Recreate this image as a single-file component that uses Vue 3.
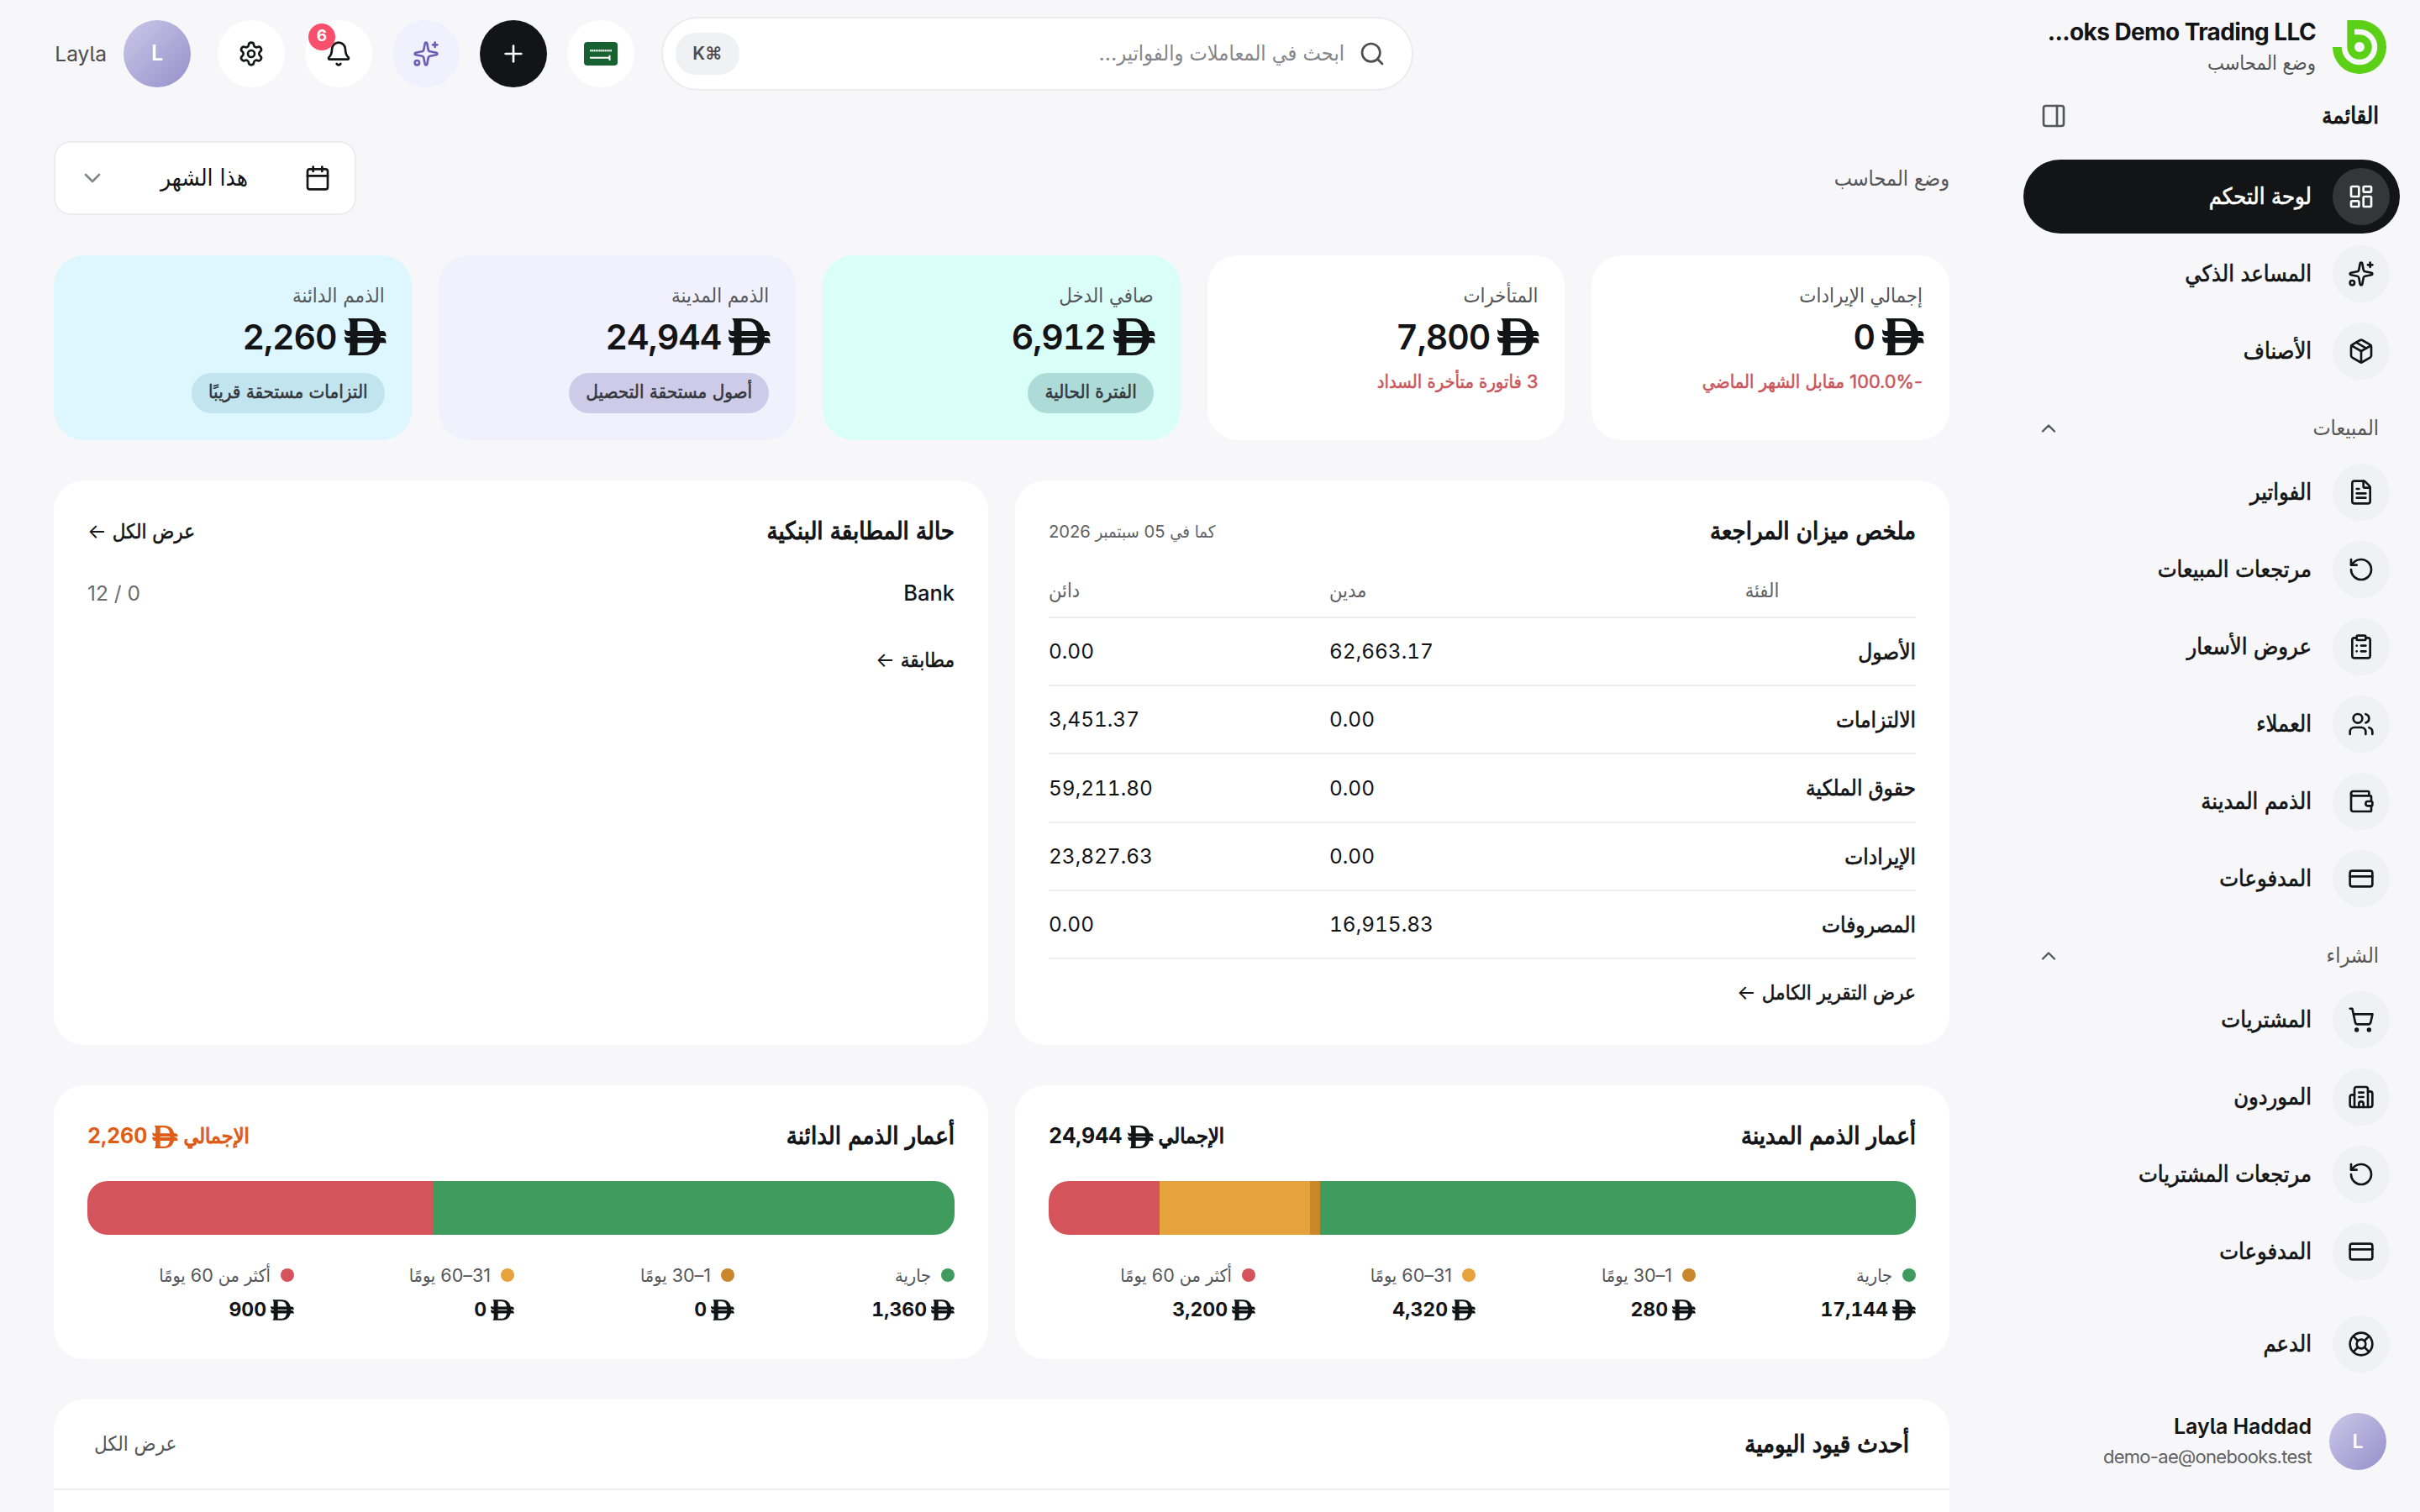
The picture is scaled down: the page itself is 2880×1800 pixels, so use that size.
<template>
  <div class="app" dir="rtl">
    <aside class="sidebar">
      <div class="brand">
        <svg class="logo" viewBox="0 0 64 64">
          <path
            fill="#5bd016"
            fill-rule="evenodd"
            d="M17.3 0H32A32 32 0 1 1 0 32H10.7A21.3 21.3 0 1 0 32 10.7H26V17.3H32A14.7 14.7 0 1 1 17.3 32ZM26 32a6 6 0 1 0 12 0a6 6 0 1 0-12 0Z"
          />
        </svg>
        <div class="brand-text">
          <div class="brand-name" dir="ltr">...oks Demo Trading LLC</div>
          <div class="brand-mode">وضع المحاسب</div>
        </div>
      </div>

      <div class="menu-head">
        <span class="menu-title">القائمة</span>
        <svg class="icon" viewBox="0 0 24 24" v-html="icons.panel"></svg>
      </div>

      <nav class="nav">
        <template v-for="(group, g) in menu" :key="g">
          <div v-if="group.title" class="group-head">
            <span>{{ group.title }}</span>
            <svg class="icon chev" viewBox="0 0 24 24" v-html="icons.up"></svg>
          </div>
          <div
            v-for="item in group.items"
            :key="item.label"
            :class="['nav-item', { active: item.active }]"
          >
            <span class="nav-icon">
              <svg class="icon" viewBox="0 0 24 24" v-html="icons[item.icon]"></svg>
            </span>
            <span class="nav-label">{{ item.label }}</span>
          </div>
        </template>
      </nav>

      <div class="nav-item support">
        <span class="nav-icon">
          <svg class="icon" viewBox="0 0 24 24" v-html="icons.buoy"></svg>
        </span>
        <span class="nav-label">الدعم</span>
      </div>

      <div class="user">
        <span class="avatar small">L</span>
        <div class="user-text">
          <div class="user-name">Layla Haddad</div>
          <div class="user-mail">demo-ae@onebooks.test</div>
        </div>
      </div>
    </aside>

    <main class="main">
      <header class="topbar">
        <div class="search">
          <svg class="icon" viewBox="0 0 24 24" v-html="icons.search"></svg>
          <span class="placeholder">ابحث في المعاملات والفواتير...</span>
          <span class="kbd">⌘K</span>
        </div>
        <div class="actions">
          <span class="round">
            <svg class="flag" viewBox="0 0 40 28">
              <rect width="40" height="28" rx="4" fill="#17602f" />
              <path d="M7 10.3H33" stroke="#fff" stroke-width="2.6" stroke-dasharray="1.8 .4" opacity=".85" />
              <path d="M7 18.7H31M30.5 15.8V22" stroke="#fff" stroke-width="2" fill="none" />
            </svg>
          </span>
          <span class="round dark">
            <svg class="icon" viewBox="0 0 24 24" v-html="icons.plus"></svg>
          </span>
          <span class="round lilac">
            <svg class="icon" viewBox="0 0 24 24" v-html="icons.sparkles"></svg>
          </span>
          <span class="round">
            <svg class="icon" viewBox="0 0 24 24" v-html="icons.bell"></svg>
            <span class="badge">6</span>
          </span>
          <span class="round">
            <svg class="icon" viewBox="0 0 24 24" v-html="icons.gear"></svg>
          </span>
        </div>
        <div class="me">
          <span class="avatar">L</span>
          <span class="me-name">Layla</span>
        </div>
      </header>

      <div class="subbar">
        <span class="mode">وضع المحاسب</span>
        <div class="period">
          <svg class="icon" viewBox="0 0 24 24" v-html="icons.calendar"></svg>
          <span class="period-label">هذا الشهر</span>
          <svg class="icon muted" viewBox="0 0 24 24" v-html="icons.down"></svg>
        </div>
      </div>

      <section class="kpis">
        <div v-for="k in kpis" :key="k.label" :class="['kpi', k.tone]">
          <div class="kpi-label">{{ k.label }}</div>
          <div class="kpi-value">
            <svg class="aed" viewBox="0 0 50 44"><path :d="aed" fill-rule="evenodd" /><path :d="aedBars" /></svg>
            <span>{{ k.value }}</span>
          </div>
          <div v-if="k.pill" class="kpi-pill">{{ k.pill }}</div>
          <div v-else class="kpi-note">{{ k.note }}</div>
        </div>
      </section>

      <section class="two">
        <div class="card tall">
          <div class="card-head">
            <h3>ملخص ميزان المراجعة</h3>
            <span class="as-of">كما في 05 سبتمبر 2026</span>
          </div>
          <div class="table">
            <div class="tr th">
              <span class="c-name">الفئة</span>
              <span class="c-debit">مدين</span>
              <span class="c-credit">دائن</span>
            </div>
            <div v-for="row in balance" :key="row[0]" class="tr">
              <span class="c-name">{{ row[0] }}</span>
              <span class="c-debit">{{ row[1] }}</span>
              <span class="c-credit">{{ row[2] }}</span>
            </div>
          </div>
          <div class="link full">عرض التقرير الكامل <i>←</i></div>
        </div>

        <div class="card tall">
          <div class="card-head">
            <h3>حالة المطابقة البنكية</h3>
            <span class="link">عرض الكل <i>←</i></span>
          </div>
          <div class="bank">
            <span class="bank-name">Bank</span>
            <span class="bank-count">0 / 12</span>
          </div>
          <div class="link match">مطابقة <i>←</i></div>
        </div>
      </section>

      <section class="two">
        <div v-for="a in aging" :key="a.title" class="card aging">
          <div class="card-head">
            <h3>{{ a.title }}</h3>
            <span :class="['total', { orange: a.orange }]">
              <span class="total-label">الإجمالي</span>
              <svg class="aed" viewBox="0 0 50 44"><path :d="aed" fill-rule="evenodd" /><path :d="aedBars" /></svg>
              <span>{{ fmt(sum(a.values)) }}</span>
            </span>
          </div>
          <div class="bar">
            <span
              v-for="(v, i) in a.values"
              :key="i"
              :class="'b' + i"
              :style="{ width: (v / sum(a.values)) * 100 + '%' }"
            ></span>
          </div>
          <div class="legend">
            <div v-for="(v, i) in a.values" :key="i">
              <div class="legend-label"><span :class="['dot', 'b' + i]"></span>{{ buckets[i] }}</div>
              <div class="legend-value">
                <svg class="aed" viewBox="0 0 50 44"><path :d="aed" fill-rule="evenodd" /><path :d="aedBars" /></svg>
                <span>{{ fmt(v) }}</span>
              </div>
            </div>
          </div>
        </div>
      </section>

      <section class="journal">
        <div class="journal-head">
          <h3>أحدث قيود اليومية</h3>
          <span class="all">عرض الكل</span>
        </div>
      </section>
    </main>
  </div>
</template>

<script setup>
const icons = {
  panel: '<rect width="18" height="18" x="3" y="3" rx="2"/><path d="M15 3v18"/>',
  up: '<path d="m18 15-6-6-6 6"/>',
  down: '<path d="m6 9 6 6 6-6"/>',
  dashboard:
    '<rect width="7" height="9" x="3" y="3" rx="1"/><rect width="7" height="5" x="14" y="3" rx="1"/><rect width="7" height="9" x="14" y="12" rx="1"/><rect width="7" height="5" x="3" y="16" rx="1"/>',
  sparkles:
    '<path d="M11.017 2.814a1 1 0 0 1 1.966 0l1.051 5.558a2 2 0 0 0 1.594 1.594l5.558 1.051a1 1 0 0 1 0 1.966l-5.558 1.051a2 2 0 0 0-1.594 1.594l-1.051 5.558a1 1 0 0 1-1.966 0l-1.051-5.558a2 2 0 0 0-1.594-1.594l-5.558-1.051a1 1 0 0 1 0-1.966l5.558-1.051a2 2 0 0 0 1.594-1.594z"/><path d="M20 2v4"/><path d="M22 4h-4"/><circle cx="4" cy="20" r="2"/>',
  box: '<path d="M11 21.73a2 2 0 0 0 2 0l7-4A2 2 0 0 0 21 16V8a2 2 0 0 0-1-1.73l-7-4a2 2 0 0 0-2 0l-7 4A2 2 0 0 0 3 8v8a2 2 0 0 0 1 1.73z"/><path d="M12 22V12"/><path d="M3.29 7 12 12l8.71-5"/><path d="m7.5 4.27 9 5.15"/>',
  file: '<path d="M6 22a2 2 0 0 1-2-2V4a2 2 0 0 1 2-2h8a2.4 2.4 0 0 1 1.704.706l3.588 3.588A2.4 2.4 0 0 1 20 8v12a2 2 0 0 1-2 2z"/><path d="M14 2v5a1 1 0 0 0 1 1h5"/><path d="M10 9H8"/><path d="M16 13H8"/><path d="M16 17H8"/>',
  rotate: '<path d="M3 12a9 9 0 1 0 9-9 9.75 9.75 0 0 0-6.74 2.74L3 8"/><path d="M3 3v5h5"/>',
  clipboard:
    '<rect width="8" height="4" x="8" y="2" rx="1"/><path d="M16 4h2a2 2 0 0 1 2 2v14a2 2 0 0 1-2 2H6a2 2 0 0 1-2-2V6a2 2 0 0 1 2-2h2"/><path d="M12 11h4"/><path d="M12 16h4"/><path d="M8 11h.01"/><path d="M8 16h.01"/>',
  users:
    '<path d="M16 21v-2a4 4 0 0 0-4-4H6a4 4 0 0 0-4 4v2"/><path d="M16 3.128a4 4 0 0 1 0 7.744"/><path d="M22 21v-2a4 4 0 0 0-3-3.87"/><circle cx="9" cy="7" r="4"/>',
  wallet:
    '<path d="M19 7V4a1 1 0 0 0-1-1H5a2 2 0 0 0 0 4h15a1 1 0 0 1 1 1v4h-3a2 2 0 0 0 0 4h3a1 1 0 0 0 1-1v-2a1 1 0 0 0-1-1"/><path d="M3 5v14a2 2 0 0 0 2 2h15a1 1 0 0 0 1-1v-4"/>',
  card: '<rect width="20" height="14" x="2" y="5" rx="2"/><path d="M2 10h20"/>',
  cart: '<circle cx="8" cy="21" r="1"/><circle cx="19" cy="21" r="1"/><path d="M2.05 2.05h2l2.66 12.42a2 2 0 0 0 2 1.58h9.78a2 2 0 0 0 1.95-1.57l1.65-7.43H5.12"/>',
  building:
    '<path d="M10 12h4"/><path d="M10 8h4"/><path d="M14 21v-3a2 2 0 0 0-4 0v3"/><path d="M6 10H4a2 2 0 0 0-2 2v7a2 2 0 0 0 2 2h16a2 2 0 0 0 2-2V9a2 2 0 0 0-2-2h-2"/><path d="M6 21V5a2 2 0 0 1 2-2h8a2 2 0 0 1 2 2v16"/>',
  buoy: '<circle cx="12" cy="12" r="10"/><path d="m4.93 4.93 4.24 4.24"/><path d="m14.83 9.17 4.24-4.24"/><path d="m14.83 14.83 4.24 4.24"/><path d="m9.17 14.83-4.24 4.24"/><circle cx="12" cy="12" r="4"/>',
  search: '<path d="m21 21-4.34-4.34"/><circle cx="11" cy="11" r="8"/>',
  plus: '<path d="M5 12h14"/><path d="M12 5v14"/>',
  bell: '<path d="M10.268 21a2 2 0 0 0 3.464 0"/><path d="M3.262 15.326A1 1 0 0 0 4 17h16a1 1 0 0 0 .74-1.673C19.41 13.956 18 12.499 18 8A6 6 0 0 0 6 8c0 4.499-1.411 5.956-2.738 7.326"/>',
  gear: '<path d="M9.671 4.136a2.34 2.34 0 0 1 4.659 0 2.34 2.34 0 0 0 3.319 1.915 2.34 2.34 0 0 1 2.33 4.033 2.34 2.34 0 0 0 0 3.831 2.34 2.34 0 0 1-2.33 4.033 2.34 2.34 0 0 0-3.319 1.915 2.34 2.34 0 0 1-4.659 0 2.34 2.34 0 0 0-3.32-1.915 2.34 2.34 0 0 1-2.33-4.033 2.34 2.34 0 0 0 0-3.831A2.34 2.34 0 0 1 6.35 6.051a2.34 2.34 0 0 0 3.319-1.915"/><circle cx="12" cy="12" r="3"/>',
  calendar:
    '<path d="M8 2v4"/><path d="M16 2v4"/><rect width="18" height="18" x="3" y="4" rx="2"/><path d="M3 10h18"/>'
}

// dirham sign: the D and its two wavy bars
const aed =
  'M4 0H23C36 0 43 8 43 22S36 44 23 44H4C6 42 6.5 40 6.5 37V7C6.5 4 6 2 4 0ZM15.500 3.500V40.500H22C31 40.500 34.500 35 34.500 22S31 3.500 22 3.500Z'
const aedBars =
  'M0 13C1 14.500 2.500 15 4.500 15H45C48 15 49.500 16.500 49.500 21.500C48.500 21 47 21 45 21H4.500C1.500 21 0 18 0 13ZM0 21.500C1 22.500 2.500 22.700 4.500 22.700H45C48 22.700 49.500 25 49.500 30C48.500 29.200 47 29.200 45 29.200H4.500C1.500 29.200 0 26.500 0 21.500Z'

const menu = [
  {
    items: [
      { label: 'لوحة التحكم', icon: 'dashboard', active: true },
      { label: 'المساعد الذكي', icon: 'sparkles' },
      { label: 'الأصناف', icon: 'box' }
    ]
  },
  {
    title: 'المبيعات',
    items: [
      { label: 'الفواتير', icon: 'file' },
      { label: 'مرتجعات المبيعات', icon: 'rotate' },
      { label: 'عروض الأسعار', icon: 'clipboard' },
      { label: 'العملاء', icon: 'users' },
      { label: 'الذمم المدينة', icon: 'wallet' },
      { label: 'المدفوعات', icon: 'card' }
    ]
  },
  {
    title: 'الشراء',
    items: [
      { label: 'المشتريات', icon: 'cart' },
      { label: 'الموردون', icon: 'building' },
      { label: 'مرتجعات المشتريات', icon: 'rotate' },
      { label: 'المدفوعات', icon: 'card' }
    ]
  }
]

const kpis = [
  { label: 'إجمالي الإيرادات', value: '0', note: '-100.0% مقابل الشهر الماضي' },
  { label: 'المتأخرات', value: '7,800', note: '3 فاتورة متأخرة السداد' },
  { label: 'صافي الدخل', value: '6,912', pill: 'الفترة الحالية', tone: 'mint' },
  { label: 'الذمم المدينة', value: '24,944', pill: 'أصول مستحقة التحصيل', tone: 'lavender' },
  { label: 'الذمم الدائنة', value: '2,260', pill: 'التزامات مستحقة قريبًا', tone: 'sky' }
]

const balance = [
  ['الأصول', '62,663.17', '0.00'],
  ['الالتزامات', '0.00', '3,451.37'],
  ['حقوق الملكية', '0.00', '59,211.80'],
  ['الإيرادات', '0.00', '23,827.63'],
  ['المصروفات', '16,915.83', '0.00']
]

const buckets = ['جارية', '1–30 يومًا', '31–60 يومًا', 'أكثر من 60 يومًا']

const aging = [
  { title: 'أعمار الذمم المدينة', values: [17144, 280, 4320, 3200] },
  { title: 'أعمار الذمم الدائنة', values: [1360, 0, 0, 900], orange: true }
]

const sum = (list) => list.reduce((a, b) => a + b, 0)
const fmt = (n) => n.toLocaleString('en-US')
</script>

<style>
body {
  background: #f7f7f9;
}
</style>

<style scoped>
.app {
  display: flex;
  width: 2880px;
  height: 1800px;
  overflow: hidden;
  background: #f7f7f9;
  color: #131416;
  font-family: Inter, "DejaVu Sans Condensed", "DejaVu Sans", sans-serif;
  font-feature-settings: "cv05";
  font-size: 24px;
  line-height: 1.5;
  white-space: nowrap;
}

.app * {
  box-sizing: border-box;
}

/* the Arabic face has no medium or semibold, a thin stroke stands in */
h3 {
  margin: 0;
  font-size: 29px;
  font-weight: 400;
  line-height: 40px;
  -webkit-text-stroke: 1.1px currentColor;
}

.icon {
  width: 32px;
  height: 32px;
  flex: none;
  fill: none;
  stroke: currentColor;
  stroke-width: 2;
  stroke-linecap: round;
  stroke-linejoin: round;
}

.aed {
  flex: none;
  fill: currentColor;
}

/* sidebar */
.sidebar {
  display: flex;
  flex-direction: column;
  width: 496px;
  flex: none;
  padding: 16px 24px 0;
}

.brand {
  display: flex;
  gap: 20px;
  height: 80px;
  padding: 8px 16px 0;
}

.logo {
  width: 64px;
  height: 64px;
  flex: none;
}

.brand-text {
  display: flex;
  flex-direction: column;
  align-items: flex-start;
}

.brand-name {
  height: 32px;
  line-height: 28px;
  font-size: 28px;
  font-weight: 700;
  letter-spacing: -0.6px;
}

.brand-mode {
  line-height: 42px;
  font-size: 23.5px;
  color: #55565a;
}

.menu-head {
  display: flex;
  align-items: center;
  justify-content: space-between;
  height: 52px;
  margin-top: 16px;
  padding: 0 25px 0 20px;
  color: #55565a;
}

.menu-title {
  font-size: 27px;
  color: #131416;
  -webkit-text-stroke: 1px currentColor;
}

.nav {
  display: flex;
  flex-direction: column;
  gap: 4px;
  margin-top: 26px;
}

.nav-item {
  display: flex;
  align-items: center;
  gap: 25px;
  width: 448px;
  height: 88px;
  flex: none;
  padding: 0 12px;
  border-radius: 44px;
}

.nav-icon {
  display: flex;
  align-items: center;
  justify-content: center;
  width: 68px;
  height: 68px;
  border-radius: 50%;
  background: #f0f1f3;
}

.nav-label {
  font-size: 27px;
  -webkit-text-stroke: 0.6px currentColor;
}

.active {
  background: #131416;
  color: #fff;
}

.active .nav-icon {
  background: #353638;
}

.group-head {
  display: flex;
  align-items: center;
  justify-content: space-between;
  height: 72px;
  padding: 16px 25px 0 16px;
  font-size: 25px;
  color: #55565a;
}

.chev {
  width: 28px;
  height: 28px;
}

.support {
  margin-top: 22px;
}

.user {
  display: flex;
  align-items: center;
  gap: 21px;
  margin-top: 36px;
  padding: 0 16px;
}

.user-text {
  line-height: 36px;
}

.user-name {
  font-size: 25px;
  font-weight: 600;
  letter-spacing: -0.1px;
}

.user-mail {
  font-size: 22px;
  letter-spacing: -0.7px;
  color: #606165;
}

.avatar {
  display: flex;
  align-items: center;
  justify-content: center;
  width: 80px;
  height: 80px;
  border-radius: 50%;
  background: linear-gradient(135deg, #cac8e8, #988fcb);
  color: #fff;
  font-size: 25px;
  font-weight: 600;
}

.avatar.small {
  width: 68px;
  height: 68px;
  font-size: 23px;
}

.user-mail,
.user-name {
  direction: ltr;
  text-align: right;
}

/* main column */
.main {
  width: 2384px;
  padding: 20px 64px 0;
}

.topbar {
  display: flex;
  align-items: center;
  justify-content: flex-end;
  gap: 32px;
  height: 88px;
}

.search {
  display: flex;
  align-items: center;
  width: 895px;
  height: 88px;
  padding: 0 31px 0 15px;
  border: 2px solid #ebecee;
  border-radius: 44px;
  background: #fff;
  color: #4c4d50;
}

.placeholder {
  flex: 1;
  margin-right: 17px;
  font-size: 25.2px;
  color: #85868a;
}

.kbd {
  width: 76px;
  height: 50px;
  border-radius: 24px;
  background: #f0f1f3;
  font-size: 21px;
  font-weight: 600;
  line-height: 50px;
  text-align: center;
}

.actions {
  display: flex;
  gap: 24px;
}

.round {
  position: relative;
  display: flex;
  align-items: center;
  justify-content: center;
  width: 80px;
  height: 80px;
  border-radius: 50%;
  background: #fff;
}

.dark {
  background: #131416;
  color: #fff;
}

.lilac {
  background: #f1f0fd;
  color: #6c5fb4;
}

.flag {
  width: 40px;
  height: 28px;
}

.badge {
  position: absolute;
  top: 4px;
  left: 4px;
  width: 32px;
  height: 32px;
  border-radius: 50%;
  background: #f8506c;
  color: #fff;
  font-size: 19px;
  font-weight: 700;
  line-height: 30px;
  text-align: center;
}

.me {
  display: flex;
  align-items: center;
  gap: 20px;
}

.me-name {
  width: 63px;
  font-size: 24.5px;
  color: #4c4d50;
}

.subbar {
  display: flex;
  align-items: center;
  justify-content: space-between;
  height: 88px;
  margin-top: 60px;
}

.mode {
  font-size: 25px;
  padding-top: 2px;
  color: #55565a;
}

.period {
  display: flex;
  align-items: center;
  width: 360px;
  height: 88px;
  padding: 0 28px;
  border: 2px solid #ebecee;
  border-radius: 20px;
  background: #fff;
}

.period-label {
  flex: 1;
  margin-right: 67px;
  font-size: 28px;
  line-height: 40px;
  padding-bottom: 3px;
}

.muted {
  color: #85868a;
}

.kpis {
  display: grid;
  grid-template-columns: repeat(5, 1fr);
  gap: 32px;
  margin-top: 48px;
}

.kpi {
  display: flex;
  flex-direction: column;
  align-items: flex-start;
  height: 220px;
  padding: 30px 32px 0;
  border-radius: 36px;
  background: #fff;
}

.kpi-label {
  height: 37px;
  line-height: 36px;
  font-size: 23.8px;
  color: #55565a;
}

.kpi-value {
  display: flex;
  align-items: center;
  gap: 9px;
  height: 60px;
  margin-right: -2px;
  font-size: 41px;
  font-weight: 600;
  letter-spacing: -1px;
  font-feature-settings: "tnum";
}

.kpi-value .aed {
  width: 50px;
  height: 44px;
}

.kpi-value span {
  padding-top: 2px;
}

.kpi-note {
  margin-top: 5px;
  line-height: 36px;
  font-size: 21.8px;
  color: #c9565c;
  -webkit-text-stroke: 0.5px currentColor;
}

.kpi-pill {
  height: 48px;
  margin-top: 13px;
  padding: 0 20px;
  border-radius: 24px;
  font-size: 22.3px;
  line-height: 44px;
  color: #34373d;
  -webkit-text-stroke: 0.5px currentColor;
}

.mint {
  background: #dafef8;
}

.mint .kpi-pill {
  background: #addcd8;
}

.lavender {
  background: #f1f0fd;
}

.lavender .kpi-pill {
  background: #cdcbe8;
}

.sky {
  background: #def6fe;
}

.sky .kpi-pill {
  background: #c1e4ef;
}

.two {
  display: grid;
  grid-template-columns: 1fr 1fr;
  gap: 32px;
  margin-top: 48px;
}

.card {
  padding: 40px 40px 0;
  border-radius: 36px;
  background: #fff;
}

.tall {
  height: 672px;
}

.card-head {
  display: flex;
  align-items: center;
  justify-content: space-between;
  height: 42px;
}

.card-head h3 {
  padding-bottom: 2px;
}

.as-of {
  font-size: 20.2px;
  color: #606165;
}

.table {
  margin-top: 18px;
}

.tr {
  display: grid;
  grid-template-columns: 366px 332px 334px;
  align-items: center;
  height: 81.2px;
  border-bottom: 2px solid #eeeef0;
  font-size: 24.4px;
  font-feature-settings: "tnum";
}

.tr.th {
  height: 64px;
  font-size: 23.5px;
  color: #606165;
}

.c-name {
  font-size: 26px;
  -webkit-text-stroke: 0.6px currentColor;
}

.th .c-name {
  font-size: 23.5px;
  text-align: center;
  -webkit-text-stroke: 0;
}

.c-debit,
.c-credit {
  direction: ltr;
  text-align: left;
}

.link {
  font-size: 24px;
  -webkit-text-stroke: 0.5px currentColor;
}

.link i {
  font-style: normal;
  -webkit-text-stroke: 0;
}

.full {
  margin-top: 22px;
}

.bank {
  display: flex;
  align-items: center;
  justify-content: space-between;
  height: 40px;
  margin-top: 32px;
}

.bank-name {
  font-size: 25.5px;
  font-weight: 500;
}

.bank-count {
  font-size: 24.5px;
  color: #6b6c70;
}

.match {
  margin-top: 42px;
}

.aging {
  height: 326px;
}

.total {
  display: flex;
  align-items: center;
  gap: 6px;
  font-size: 25px;
  font-weight: 700;
  font-feature-settings: "tnum";
}

.total-label {
  font-size: 25px;
  font-weight: 400;
  -webkit-text-stroke: 1.1px currentColor;
}

.total .aed {
  width: 31px;
  height: 27px;
}

.orange {
  color: #df5d17;
}

.bar {
  display: flex;
  height: 64px;
  margin-top: 32px;
  border-radius: 24px;
  overflow: hidden;
}

.b0 {
  background: #3f9c5e;
}

.b1 {
  background: #c8872b;
}

.b2 {
  background: #e6a23c;
}

.b3 {
  background: #d5545b;
}

.legend {
  display: grid;
  grid-template-columns: repeat(4, 1fr);
  gap: 16px;
  margin-top: 28px;
}

.legend-label {
  display: flex;
  align-items: center;
  gap: 12px;
  height: 40px;
  font-size: 21.5px;
  color: #55565a;
}

.dot {
  width: 16px;
  height: 16px;
  border-radius: 50%;
}

.legend-value {
  display: flex;
  align-items: center;
  gap: 5px;
  height: 42px;
  font-size: 23px;
  font-weight: 700;
  font-feature-settings: "tnum";
}

.legend-value .aed {
  width: 28px;
  height: 25px;
}

.journal {
  height: 300px;
  margin-top: 48px;
  border-radius: 36px;
  background: #fff;
}

.journal-head {
  display: flex;
  align-items: center;
  justify-content: space-between;
  height: 108px;
  padding: 0 48px;
  border-bottom: 2px solid #ebebf0;
}

.all {
  font-size: 24px;
  color: #55565a;
}
</style>
